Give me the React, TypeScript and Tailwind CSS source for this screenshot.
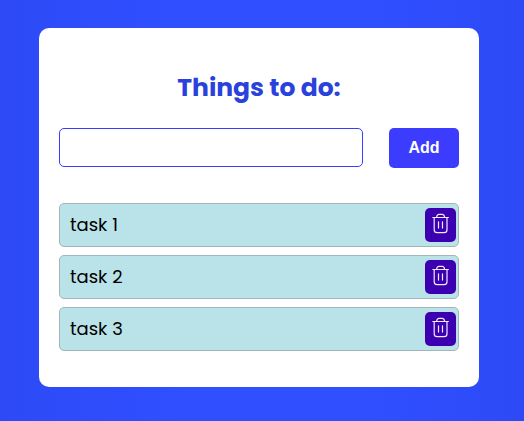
const tasks = ["task 1", "task 2", "task 3"];

function TrashIcon() {
  return (
    <svg
      width="31"
      height="34"
      viewBox="0 0 31 34"
      fill="none"
      stroke="#f0e9ff"
      strokeWidth="1.2"
      strokeLinecap="round"
      strokeLinejoin="round"
      aria-hidden="true"
    >
      <path d="M7.8 9.5h15.6" />
      <path d="M11.6 9.3c.2-2 1.1-3 2.4-3h3.2c1.3 0 2.2 1 2.4 3" />
      <path d="M9.2 9.7v12.1c0 1.9 1 2.9 2.9 2.9h7c1.9 0 2.9-1 2.9-2.9V9.7" />
      <path d="M13.5 13.8v6.3M17.5 13.8v6.3" />
    </svg>
  );
}

export default function App() {
  return (
    <main className="h-[421px] w-[524px] bg-[linear-gradient(90deg,#2d4af6_0%,#304fff_35%,#304fff_70%,#2d4af6_100%)] pt-7 pl-[39px] font-[Poppins,Inter,sans-serif]">
      <section className="h-[359px] w-[440px] rounded-[10px] bg-white px-5 pt-[41px]">
        <h1 className="h-[59px] text-center text-[25px] leading-[38px] font-bold text-[#2a41dc]">
          Things to do:
        </h1>
        <form className="flex items-start justify-between">
          <input
            type="text"
            aria-label="New task"
            className="h-[39px] w-[304px] rounded-[5px] border border-[#3c3cff] bg-white px-2 outline-none"
          />
          <button
            type="button"
            className="h-10 w-[70px] rounded-[5px] bg-[#3c3cff] font-['Liberation_Sans',Arial,sans-serif] text-base font-bold text-white"
          >
            Add
          </button>
        </form>
        <ul className="mt-[35px] flex flex-col gap-2">
          {tasks.map((task) => (
            <li
              key={task}
              className="flex h-11 items-center justify-between rounded-[5px] border border-[#a5b4ba] bg-[#b9e3e8] pr-[2px] pl-[10px]"
            >
              <span className="pb-0.5 text-[18px] leading-[27px] text-black">{task}</span>
              <button type="button" aria-label="Delete" className="h-[34px] w-[31px] rounded-[5px] bg-[#3c00b0]">
                <TrashIcon />
              </button>
            </li>
          ))}
        </ul>
      </section>
    </main>
  );
}
